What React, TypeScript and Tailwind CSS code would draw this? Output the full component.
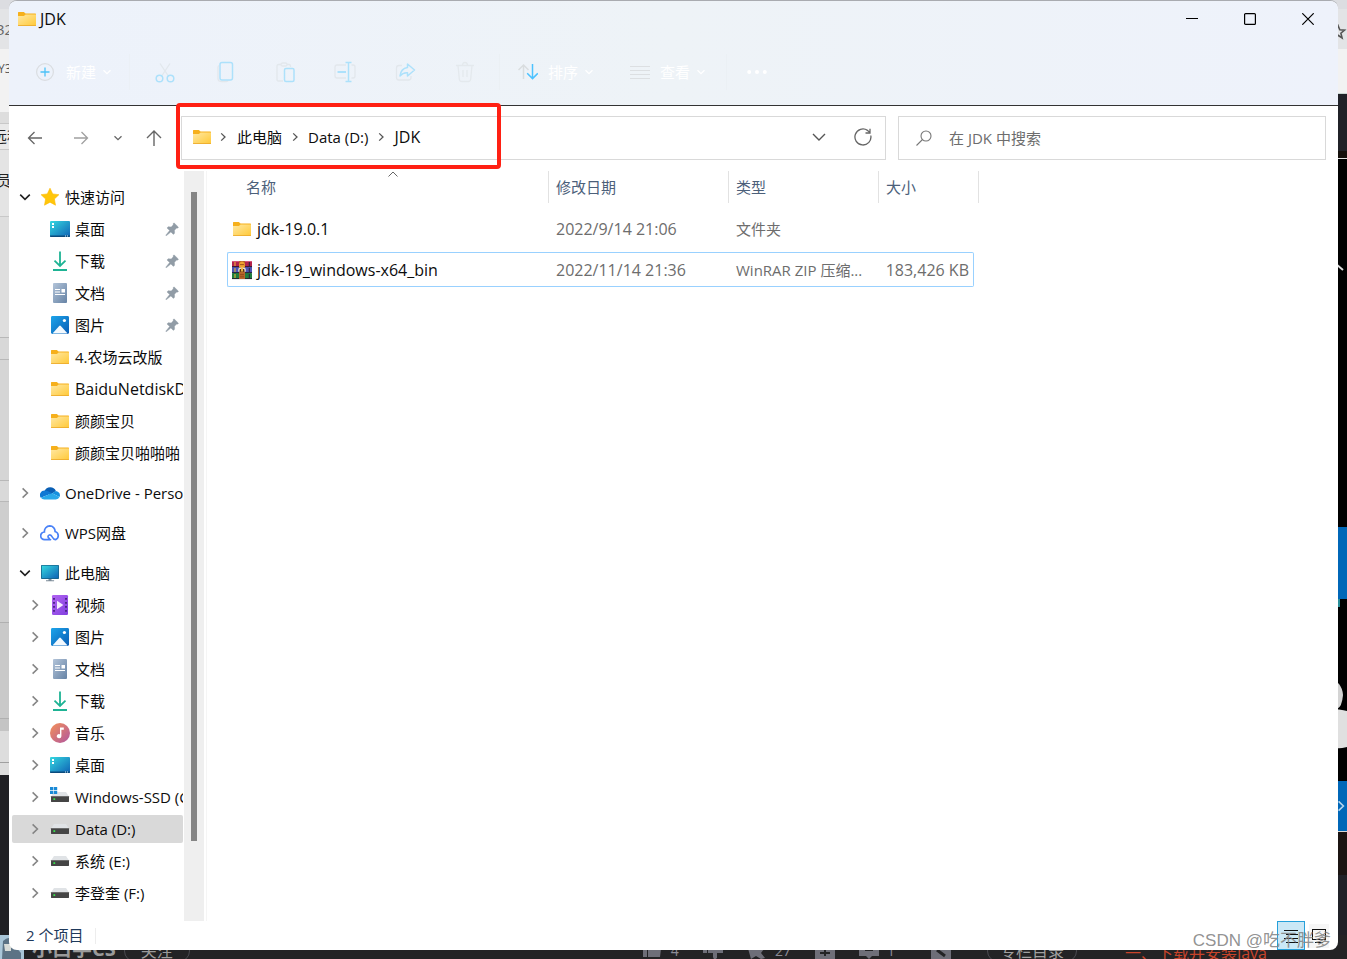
import { useState, type ReactNode } from "react";
import clsx from "clsx";

type IconProps = { className?: string };

const FolderIcon = ({ className = "w-5 h-5" }: IconProps) => (
    <svg viewBox="0 0 20 20" className={className}>
        <defs>
            <linearGradient id="folderFront" x1="0" y1="0" x2="1" y2="1">
                <stop offset="0" stopColor="#ffe8a3" />
                <stop offset="1" stopColor="#ffc938" />
            </linearGradient>
        </defs>
        <path d="M1 3.6q0-.6.6-.6h5.2l1.8 1.6H18.4q.6 0 .6.6V8H1z" fill="#f6b01c" />
        <path d="M1 6.9h5.9l1.7-1.3H19v10.6q0 .5-.6.5H1.6q-.6 0-.6-.5z" fill="url(#folderFront)" />
        <path d="M1 16.2h18v.3q0 .5-.6.5H1.6q-.6 0-.6-.5z" fill="#eaa21a" />
    </svg>
);

const StarIcon = () => (
    <svg viewBox="0 0 20 20" className="w-5 h-5">
        <path d="M10 1.2l2.7 5.7 6.2.8-4.5 4.3 1.1 6.2L10 15.2l-5.5 3 1.1-6.2L1.1 7.7l6.2-.8z" fill="#ffc60a" stroke="#fdb900" strokeWidth=".6" strokeLinejoin="round" />
    </svg>
);

const DesktopIcon = () => (
    <svg viewBox="0 0 20 20" className="w-5 h-5">
        <defs>
            <linearGradient id="desk" x1="0" y1="0" x2="1" y2="1">
                <stop offset="0" stopColor="#35d8e0" />
                <stop offset="1" stopColor="#0f62b5" />
            </linearGradient>
        </defs>
        <rect y="2" width="20" height="16" rx="1" fill="url(#desk)" />
        <path d="M0 16.6h20v.6q0 .8-1 .8H1q-1 0-1-.8z" fill="#0b4a7c" />
        <path d="M2 4h2v2H2zM2 7h2v2H2z" fill="#fff" />
        <path d="M15 17h1M17 17h1" stroke="#d5eefb" strokeWidth="1" />
    </svg>
);

const DownloadIcon = () => (
    <svg viewBox="0 0 20 20" className="w-5 h-5" fill="none">
        <path d="M10 .5v14M4.500 9.600l5.500 5.300 5.500-5.300M3 19h14" stroke="#1eb394" strokeWidth="1.800" />
    </svg>
);

const DocumentIcon = () => (
    <svg viewBox="0 0 20 20" className="w-5 h-5">
        <defs>
            <linearGradient id="doc" x1="0" y1="0" x2="1" y2="1">
                <stop offset="0" stopColor="#b3c4d9" />
                <stop offset="1" stopColor="#6683a5" />
            </linearGradient>
        </defs>
        <rect x="3" y="0" width="14" height="20" rx="1" fill="url(#doc)" />
        <path d="M5 6.500h5M5 9h5M5 11.500h10" stroke="#fff" strokeWidth="1.200" />
        <path d="M11.500 6h3.500v3.400h-3.500z" fill="#fff" />
    </svg>
);

const PictureIcon = () => (
    <svg viewBox="0 0 20 20" className="w-5 h-5">
        <defs>
            <linearGradient id="pic" x1="0" y1="0" x2="1" y2="1">
                <stop offset="0" stopColor="#1da5ea" />
                <stop offset="1" stopColor="#0a5cb4" />
            </linearGradient>
        </defs>
        <rect x="1" y="1" width="18" height="18" rx="1.4" fill="url(#pic)" />
        <circle cx="14.4" cy="5.5" r="1.6" fill="#fff" />
        <path d="M2.5 18.4l6.7-7.5q.8-.8 1.6 0l6.8 7.5z" fill="#f3f9fe" />
    </svg>
);

const OneDriveIcon = () => (
    <svg viewBox="0 0 20 20" className="w-5 h-5">
        <path d="M4.5 8.2A6.2 6.2 0 0 1 15.9 8L10 12z" fill="#0a5fb4" />
        <path d="M4.6 7.6a4.5 4.5 0 0 0-3.8 7.2L12 10.2 8 8.3a6 6 0 0 0-3.4-.7z" fill="#0f78d4" />
        <path d="M12 10.2l3.9-2.3a4.4 4.4 0 0 1 3.6 6.2z" fill="#1490df" />
        <path d="M.8 14.8A4.4 4.4 0 0 0 4.5 16.6h11.3a4 4 0 0 0 3.7-2.5L12 10.2z" fill="#28a8ea" />
    </svg>
);

const WpsCloudIcon = () => (
    <svg viewBox="0 0 20 20" className="w-5 h-5" fill="none" stroke="#4a82f7" strokeWidth="1.7" strokeLinecap="round">
        <path d="M10.5 16.6H4.6A3.8 3.8 0 0 1 4.4 9 5.6 5.6 0 0 1 9.8 2.9a5.4 5.4 0 0 1 5.3 5.6 4.3 4.3 0 0 1 .5 8.1c-4.2 0-2.6-5.2-6.2-4.6-1.8.4-1.8 2.8-.2 3.2" />
    </svg>
);

const ComputerIcon = () => (
    <svg viewBox="0 0 20 20" className="w-5 h-5">
        <rect x="1" y="2" width="18" height="14" rx=".8" fill="#16648c" />
        <rect x="1.8" y="2.7" width="16.4" height="12.4" fill="url(#desk)" />
        <path d="M8.5 16h3v1.3h2.6v1H6v-1h2.5z" fill="#7d8c99" />
    </svg>
);

const VideoIcon = () => (
    <svg viewBox="0 0 20 20" className="w-5 h-5">
        <defs>
            <linearGradient id="vid" x1="0" y1="0" x2="1" y2="1">
                <stop offset="0" stopColor="#b264f2" />
                <stop offset="1" stopColor="#8140df" />
            </linearGradient>
        </defs>
        <rect x="2" y="0" width="16" height="20" rx="1.2" fill="url(#vid)" />
        <path d="M4 3v15M16 3v15" stroke="#46217f" strokeWidth="1.8" strokeDasharray="1.8 2.2" />
        <path d="M7 5.8l6.4 4.2L7 14.2z" fill="#f5edff" />
    </svg>
);

const MusicIcon = () => (
    <svg viewBox="0 0 20 20" className="w-5 h-5">
        <defs>
            <linearGradient id="mus" x1="0" y1="0" x2="1" y2="1">
                <stop offset="0" stopColor="#f49158" />
                <stop offset="1" stopColor="#b0559f" />
            </linearGradient>
        </defs>
        <circle cx="10" cy="10" r="10" fill="url(#mus)" />
        <path d="M10 4.4h3.8v2.4h-2.4v6.4a2.3 2.1 0 1 1-1.4-2z" fill="#fff" />
    </svg>
);

const DriveIcon = ({ system = false }: { system?: boolean }) => (
    <svg viewBox="0 0 20 20" className="w-5 h-5">
        <path d="M4 5h12l3 4.500H1z" fill="#e0e3e6" />
        <rect x="1" y="9" width="18" height="6" rx=".4" fill="#454545" />
        <path d="M1 9h18v1H1z" fill="#6d6d6d" />
        <rect x="3.400" y="11.200" width="1.800" height="1.800" fill="#38e04c" />
        {system && <path d="M0 0h3.300v3.300H0zM3.900 0h3.300v3.300H3.900zM0 3.900h3.300v3.200H0zM3.900 3.900h3.300v3.200H3.900z" fill="#1b8ad6" />}
    </svg>
);

const WinRarIcon = () => (
    <svg viewBox="0 0 20 20" className="w-5 h-5">
        <rect x="0" y="1" width="20" height="6" rx=".6" fill="#b3234b" />
        <rect x="0" y="7" width="20" height="6" fill="#4c55b5" />
        <rect x="0" y="13" width="20" height="6" rx=".6" fill="#1f7d3f" />
        <path d="M0 1.500h20" stroke="#d2567a" />
        <path d="M0 6.600h20M0 12.600h20M0 18.600h20" stroke="#231a2c" strokeWidth=".9" />
        <path d="M3 2v4M3 8v4M3 14v4" stroke="#e8b53a" strokeWidth="1.100" />
        <path d="M17.300 2v4M17.300 8v4M17.300 14v4" stroke="#29213a" strokeWidth="1" />
        <rect x="7" y="1" width="6" height="18" fill="#b5652b" />
        <path d="M7.200 7V3.800q2.800-4.500 5.600 0V7z" fill="#f0a22f" />
        <path d="M8 4.600h4M8 14.600h4M8 16.800h4" stroke="#8a4417" strokeWidth=".8" />
        <path d="M6.900 11.800V9.500q0-1.500 3.100-1.500t3.100 1.500v2.300" fill="#5b3213" stroke="#e8e2da" strokeWidth="1.300" />
        <path d="M10 7v4.500" stroke="#f3c04b" strokeWidth="1.800" />
    </svg>
);

const PinIcon = () => (
    <svg viewBox="0 0 14 14" className="w-[14px] h-[14px]">
        <path d="M9 .8l4.500 4.400-1 1-.9-.1-2.100 2.200.1 2.900-1.200 1.200-2.500-2.500-4.300 3.700-.7.100.1-.8 3.600-4.300L2 6l1.200-1.300 3 .2 2.100-2.100-.2-1.100z" fill="#919ca6" stroke="#919ca6" strokeWidth=".4" />
    </svg>
);

const Chevron = ({ dir = "right", className = "" }: { dir?: "right" | "down"; className?: string }) => (
    <svg viewBox="0 0 12 12" className={clsx("w-3 h-3", className)} fill="none" stroke="currentColor" strokeWidth="1.600">
        <path d={dir === "right" ? "M3.600 1.400L8.400 6l-4.800 4.600" : "M1.200 3.600L6 8.400l4.800-4.800"} />
    </svg>
);

// Small chevron used next to toolbar labels and in the breadcrumb
const SmallChevron = ({ dir = "right" }: { dir?: "right" | "down" }) => (
    <svg viewBox="0 0 10 10" className="w-[10px] h-[10px]" fill="none" stroke="currentColor" strokeWidth="1.300">
        <path d={dir === "right" ? "M3.200 1.400L7 5 3.200 8.600" : "M1.500 3.200L5 6.700l3.500-3.500"} />
    </svg>
);

const toolIcons: { label: string; icon: ReactNode }[] = [
    {
        label: "剪切",
        icon: (
            <>
                <path d="M7 3.500l8 12M17 3.500l-8 12" stroke="#e2e7ec" />
                <circle cx="6.500" cy="18.500" r="3.300" stroke="#ade1fb" strokeWidth="1.500" />
                <circle cx="17.500" cy="18.500" r="3.300" stroke="#ade1fb" strokeWidth="1.500" />
            </>
        ),
    },
    {
        label: "复制",
        icon: (
            <>
                <path d="M6 5.500q-1 .4-1 1.800v11q0 3.200 3.200 3.200h5q1.600 0 2-1" stroke="#e2e7ec" />
                <rect x="7" y="2.500" width="12.500" height="17.500" rx="2" stroke="#ade1fb" strokeWidth="1.500" />
            </>
        ),
    },
    {
        label: "粘贴",
        icon: (
            <>
                <path d="M10 21H5.500Q4 21 4 19.500V6q0-1.500 1.500-1.500H8M14 4.500h2q1.500 0 1.500 1.500v1" stroke="#e2e7ec" />
                <rect x="8" y="3" width="6" height="3" rx="1.500" stroke="#e2e7ec" />
                <rect x="11.500" y="8.500" width="9.500" height="13" rx="1.500" stroke="#ade1fb" strokeWidth="1.500" />
            </>
        ),
    },
    {
        label: "重命名",
        icon: (
            <>
                <path d="M13 5H4Q2 5 2 7v9Q2 18 4 18H13M18.500 5h1.500q2 0 2 2v9q0 2-2 2h-1.500" stroke="#e2e7ec" />
                <path d="M12.500 2.500h6M12.500 21.500h6M15.500 2.500v19" stroke="#ade1fb" strokeWidth="1.500" />
                <path d="M4.500 12h8.500" stroke="#ade1fb" strokeWidth="2.200" />
            </>
        ),
    },
    {
        label: "共享",
        icon: (
            <>
                <path d="M9 5.500H6Q3.500 5.500 3.500 8v9.500Q3.500 20 6 20h9.500q2.500 0 2.500-2.500V16" stroke="#e2e7ec" />
                <path d="M14.500 4l7 6-7 6v-3.200q-4.500-.4-7.500 3.200 .8-7.500 7.500-8.500z" stroke="#ade1fb" strokeWidth="1.500" strokeLinejoin="round" />
            </>
        ),
    },
    {
        label: "删除",
        icon: (
            <path d="M3 5.500h18M9.500 5.500q0-3 2.500-3t2.500 3M5 5.500l1.300 13.500q.2 2.500 2.500 2.500h6.400q2.300 0 2.500-2.500L19 5.500M10 10v7M14 10v7" stroke="#e4e9ed" />
        ),
    },
];

type NavItem = { name: string; icon: ReactNode; className?: string; pinned?: boolean };

const quickAccess: NavItem[] = [
    { name: "桌面", icon: <DesktopIcon />, pinned: true },
    { name: "下载", icon: <DownloadIcon />, pinned: true },
    { name: "文档", icon: <DocumentIcon />, pinned: true },
    { name: "图片", icon: <PictureIcon />, pinned: true },
    { name: "4.农场云改版", icon: <FolderIcon /> },
    { name: "BaiduNetdiskDownload", icon: <FolderIcon />, className: "text-base leading-5" },
    { name: "颜颜宝贝", icon: <FolderIcon /> },
    { name: "颜颜宝贝啪啪啪", icon: <FolderIcon /> },
];

const thisPc: NavItem[] = [
    { name: "视频", icon: <VideoIcon /> },
    { name: "图片", icon: <PictureIcon /> },
    { name: "文档", icon: <DocumentIcon /> },
    { name: "下载", icon: <DownloadIcon /> },
    { name: "音乐", icon: <MusicIcon /> },
    { name: "桌面", icon: <DesktopIcon /> },
    { name: "Windows-SSD (C:)", icon: <DriveIcon system /> },
    { name: "Data (D:)", icon: <DriveIcon /> },
    { name: "系统 (E:)", icon: <DriveIcon /> },
    { name: "李登奎 (F:)", icon: <DriveIcon /> },
];

const files = [
    { name: "jdk-19.0.1", date: "2022/9/14 21:06", type: "文件夹", size: "", icon: <FolderIcon /> },
    { name: "jdk-19_windows-x64_bin", date: "2022/11/14 21:36", type: "WinRAR ZIP 压缩...", size: "183,426 KB", icon: <WinRarIcon /> },
];

function NavRow({ item, child = false, arrow, selected = false, onSelect }: {
    item: NavItem;
    child?: boolean;
    arrow?: "right" | "down";
    selected?: boolean;
    onSelect?: () => void;
}) {
    return (
        <li className="h-8 py-0.5">
            <a
                href="#"
                onClick={e => { e.preventDefault(); onSelect?.(); }}
                className={clsx("flex h-7 items-center overflow-hidden rounded-xs whitespace-nowrap", child && "pl-[10px]", selected && "bg-[#d9d9d9]")}
            >
                <span className="flex w-[26px] shrink-0 justify-center">
                    {arrow && <Chevron dir={arrow} className={arrow === "right" ? "text-[#858585]" : "text-[#222222]"} />}
                </span>
                <span className="ml-0.5 shrink-0">{item.icon}</span>
                <span className={clsx("ml-[5px]", item.className ?? "text-[15px]")}>{item.name}</span>
                {item.pinned && <span className="mr-1 ml-auto"><PinIcon /></span>}
            </a>
        </li>
    );
}

// Pages that stay visible around the edges of the window
function Backdrop() {
    return (
        <div className="absolute inset-0 flex flex-col overflow-hidden bg-[#202024]" aria-hidden="true">
            <div className="flex min-h-0 flex-1 justify-between">
                <div className="flex w-5 flex-col overflow-hidden text-[15px] leading-5 text-[#222222]">
                    <div className="h-[9px] shrink-0 bg-[#dcdde1]" />
                    <div className="flex h-10 shrink-0 items-center bg-[#e3e4e6] text-[#666666]"><span className="-ml-1">32</span></div>
                    <div className="h-[63px] shrink-0 bg-[#f2f2f2] pt-3 text-xs text-[#555555]"><span className="-ml-0.5">Y3</span></div>
                    <div className="h-3 shrink-0 border-b border-[#c8c8c8] bg-[#dddddd]" />
                    <div className="h-[26px] shrink-0 border-b border-[#c8c8c8] bg-[#e9e9e9] pt-0.5 whitespace-nowrap"><span className="-ml-2">远程</span></div>
                    <div className="h-[67px] shrink-0 border-b border-[#c8c8c8] bg-[#e4e4e4] pt-5"><span className="-ml-1">员</span></div>
                    <div className="h-[121px] shrink-0 border-b border-[#b8b8b8] bg-[#dedede]" />
                    <div className="h-[22px] shrink-0 border-b border-[#b8b8b8] bg-[#d8d8d8]" />
                    <div className="h-[121px] shrink-0 border-b border-[#b8b8b8] bg-[#d5d5d5]" />
                    <div className="h-[21px] shrink-0 border-b border-[#b8b8b8] bg-[#d9d9d9]" />
                    <div className="h-[121px] shrink-0 border-b border-[#b0b0b0] bg-[#cecece]" />
                    <div className="h-24 shrink-0 border-b border-[#b0b0b0] bg-[#c9c9c9]" />
                    <div className="h-3 shrink-0 bg-[#c4c4c4]" />
                    <div className="h-8 shrink-0 border-b border-[#a0a0a0] bg-[#dddddd]" />
                    <div className="h-3 shrink-0 bg-[#dddddd]" />
                    <div className="flex-1 bg-[#202024]" />
                </div>
                <div className="flex w-5 flex-col items-end overflow-hidden">
                    <div className="h-[9px] w-full shrink-0 bg-[#dcdde1]" />
                    <div className="flex h-10 w-full shrink-0 items-center justify-end bg-[#e3e4e6] pt-1.5">
                        <svg viewBox="0 0 16 16" className="h-4 w-4" fill="none" stroke="#555555" strokeWidth="1.600">
                            <path d="M7 1.500l1.800 4.300 4.700.400-3.600 3 1.200 4.700L7 11.300l-4.100 2.600 1.200-4.700-3.600-3 4.700-.400z" />
                        </svg>
                    </div>
                    <div className="h-[45px] w-full shrink-0 border-b border-[#c9d6d2] bg-[#f2f2f2]" />
                    <div className="h-[57px] w-full shrink-0 bg-[#202127]" />
                    <div className="h-2 w-full shrink-0 border-b border-[#e0e0e0] bg-[#15100c]" />
                    <div className="h-[368px] w-full shrink-0 bg-black pt-[104px]">
                        <svg viewBox="0 0 20 10" className="h-[10px] w-5"><path d="M9 1l7 6" stroke="#dddddd" strokeWidth="2" /></svg>
                    </div>
                    <div className="h-[72px] w-full shrink-0 bg-[#0067b8]" />
                    <div className="h-[182px] w-full shrink-0 bg-black">
                        <svg viewBox="0 0 20 182" className="h-[182px] w-5">
                            <path d="M11 0h2v8h-2z" fill="#2a8f9a" />
                            <path d="M0 78q15 4 16 18-1 12-6 14H0z" fill="#d4d4d4" />
                            <path d="M0 110q14 0 20 2v36q-6 2-20 1z" fill="#e0e0e0" />
                        </svg>
                    </div>
                    <div className="flex h-[51px] w-full shrink-0 items-center justify-end border-b border-[#d8d8d8] bg-[#0067b8] text-[#b4d5ee]">
                        <Chevron />
                    </div>
                    <div className="h-[43px] w-full shrink-0 bg-[#1b1412]" />
                    <div className="w-full flex-1 bg-[#202127]" />
                </div>
            </div>
            <div className="flex h-6 shrink-0 items-center overflow-hidden bg-[#232325] text-sm leading-5 whitespace-nowrap text-[#8c8c96]">
                <svg viewBox="0 0 24 24" className="h-6 w-6 shrink-0">
                    <rect width="24" height="24" fill="#a9c6d8" />
                    <path d="M3 6q8-7 10 3l8 9v6H2z" fill="#5c7385" />
                    <path d="M4 9h7v7H5z" fill="#d8dcd8" />
                </svg>
                <span className="mt-1 ml-2 text-xl leading-6 font-bold text-[#9a9a9a]">小白学CS</span>
                <span className="mt-2 ml-2 rounded-full border border-[#4a4a50] px-4 text-base leading-5 text-[#9a9a9a]">关注</span>
                <div className="ml-auto flex items-center gap-6 pt-2">
                    <span className="flex items-center gap-2">
                        <svg viewBox="0 0 20 20" className="h-5 w-5" fill="#6e6e78"><path d="M0 0h4v16H0zM5 0h14l-2 16H5z" /></svg>
                        4
                    </span>
                    <svg viewBox="0 0 20 20" className="h-5 w-5" fill="#6e6e78"><path d="M0 0h4v12H0zM5 0h15v12h-6v5q-3 3-4-1v-4H5z" /></svg>
                    <span className="flex items-center gap-2">
                        <svg viewBox="0 0 20 20" className="h-5 w-5" fill="#6e6e78"><path d="M0 4l10 3 10-3-6 8 4 5-4 1-5-3-5 3z" /></svg>
                        27
                    </span>
                    <svg viewBox="0 0 20 20" className="h-5 w-5"><path d="M0 0h20v18H0z" fill="#6e6e78" /><path d="M5 8h10M5 12h10M10 6v9" stroke="#232325" strokeWidth="2" /></svg>
                    <span className="flex items-center gap-2">
                        <svg viewBox="0 0 20 20" className="h-5 w-5"><path d="M0 0h20v15h-7l-3 3-3-3H0z" fill="#6e6e78" /><path d="M6 9h8" stroke="#232325" strokeWidth="2" /></svg>
                        1
                    </span>
                    <svg viewBox="0 0 20 20" className="ml-3 h-5 w-5"><path d="M0 0h20v18H0z" fill="#6e6e78" /><path d="M6 9l8 6" stroke="#232325" strokeWidth="3" /></svg>
                    <span className="ml-3 rounded-full border border-[#4a4a50] px-3 text-base leading-5 text-[#a0a0a0]">专栏目录</span>
                </div>
                <span className="mt-3 mr-20 ml-12 text-base leading-5 text-[#c8432a]">一、下载并安装Java</span>
            </div>
        </div>
    );
}

export default function App() {
    const [selected, setSelected] = useState("Data (D:)");
    const [search, setSearch] = useState("");

    return (
        <div className="relative flex h-screen min-h-[600px] flex-col overflow-hidden px-[9px] pb-[9px] font-['Open_Sans','Noto_Sans_CJK_SC',sans-serif] leading-5 text-[#0c0c0c]">
            <Backdrop />
            <main className="relative flex min-h-0 flex-1 flex-col overflow-hidden rounded-lg border-t border-[#a9abb0] bg-white">
                <header className="border-b border-[#333333] bg-linear-to-r from-[#edf2fb] via-[#eef3f7] to-[#eef2fb]">
                    <div className="flex h-9 items-center pl-2">
                        <FolderIcon />
                        <h1 className="ml-[3px] text-base leading-5">JDK</h1>
                        <div className="mr-[1px] ml-auto flex">
                            <button className="flex h-9 w-[58px] items-center justify-center" aria-label="最小化">
                                <svg viewBox="0 0 12 12" className="h-3 w-3"><path d="M0 5.500h12" stroke="#000" /></svg>
                            </button>
                            <button className="flex h-9 w-[58px] items-center justify-center" aria-label="最大化">
                                <svg viewBox="0 0 12 12" className="h-3 w-3" fill="none"><rect x=".6" y=".6" width="10.800" height="10.800" rx="1" stroke="#000" strokeWidth="1.200" /></svg>
                            </button>
                            <button className="flex h-9 w-[58px] items-center justify-center" aria-label="关闭">
                                <svg viewBox="0 0 12 12" className="h-3 w-3"><path d="M.3.300l11.400 11.400M11.700.300L.300 11.700" stroke="#000" strokeWidth="1.200" /></svg>
                            </button>
                        </div>
                    </div>

                    <div className="flex h-[68px] items-center pt-0.5 pl-[27px] text-[15px] text-white">
                        <button className="flex items-center">
                            <svg viewBox="0 0 18 18" className="h-[18px] w-[18px]" fill="none">
                                <circle cx="9" cy="9" r="8.400" stroke="#dadde1" strokeWidth="1.200" />
                                <path d="M9 4.500v9M4.500 9h9" stroke="#4cc2f8" strokeWidth="1.300" />
                            </svg>
                            <span className="mr-1.5 ml-3">新建</span>
                            <SmallChevron dir="down" />
                        </button>
                        <span className="mr-[5px] ml-[17px] h-9 w-px bg-[#ebf0f6]" />
                        {toolIcons.map(tool => (
                            <button key={tool.label} aria-label={tool.label} className="flex w-[60px] justify-center">
                                <svg viewBox="0 0 24 24" className="h-6 w-6" fill="none" strokeWidth="1.300">{tool.icon}</svg>
                            </button>
                        ))}
                        <span className="mr-[18px] ml-1 h-9 w-px bg-[#ebf0f4]" />
                        <button className="flex items-center">
                            <svg viewBox="0 0 20 20" className="h-5 w-5" fill="none" strokeWidth="1.500">
                                <path d="M5.500 17V3M.5 8l5-5 5 5" stroke="#d9dddf" />
                                <path d="M14.500 2v14.500M9.200 11.300l5.300 5.300 5.300-5.300" stroke="#4cc2ff" />
                            </svg>
                            <span className="mr-1.5 ml-[10px]">排序</span>
                            <SmallChevron dir="down" />
                        </button>
                        <button className="ml-9 flex items-center">
                            <svg viewBox="0 0 20 20" className="h-5 w-5" stroke="#dcdfe2">
                                <path d="M0 4.500h20M0 8.500h20M0 12.500h20M0 16.500h20" />
                            </svg>
                            <span className="mr-1.5 ml-[10px]">查看</span>
                            <SmallChevron dir="down" />
                        </button>
                        <span className="mx-5 h-9 w-px bg-[#ebf0f4]" />
                        <button aria-label="更多">
                            <svg viewBox="0 0 20 20" className="h-5 w-5" fill="#fff">
                                <circle cx="2.200" cy="10" r="2" /><circle cx="10" cy="10" r="2" /><circle cx="17.800" cy="10" r="2" />
                            </svg>
                        </button>
                    </div>
                </header>

                <div className="flex h-[65px] shrink-0 pt-[10px] pr-3 pl-[3px]">
                    <nav className="flex h-11 items-center text-[#666666]" aria-label="导航">
                        <button className="flex w-[46px] justify-center" aria-label="后退">
                            <svg viewBox="0 0 16 16" className="h-4 w-4" fill="none" stroke="currentColor" strokeWidth="1.300"><path d="M15 8H1.500M7.500 2l-6 6 6 6" /></svg>
                        </button>
                        <button className="flex w-[46px] justify-center text-[#a0a0a0]" aria-label="前进">
                            <svg viewBox="0 0 16 16" className="h-4 w-4" fill="none" stroke="currentColor" strokeWidth="1.300"><path d="M1 8h13.500M8.500 2l6 6-6 6" /></svg>
                        </button>
                        <button className="flex w-7 justify-center" aria-label="最近的位置"><SmallChevron dir="down" /></button>
                        <button className="flex w-11 justify-center" aria-label="向上">
                            <svg viewBox="0 0 16 16" className="h-4 w-4" fill="none" stroke="currentColor" strokeWidth="1.400"><path d="M8 16V1M1 8l7-7 7 7" /></svg>
                        </button>
                    </nav>

                    <div className="relative ml-[5px] flex h-11 min-w-0 flex-1 items-center border border-[#d9d9d9] pb-0.5 pl-[10px] text-[15px]">
                        <FolderIcon />
                        <span className="mx-1.5 text-[#555555]"><SmallChevron /></span>
                        <button className="ml-[3px]">此电脑</button>
                        <span className="mx-2 text-[#555555]"><SmallChevron /></span>
                        <button>Data (D:)</button>
                        <span className="mx-2 text-[#555555]"><SmallChevron /></span>
                        <button className="text-base leading-5">JDK</button>
                        <button className="ml-auto flex w-11 justify-center text-[#555555]" aria-label="上一个位置">
                            <svg viewBox="0 0 14 14" className="h-[14px] w-[14px]" fill="none" stroke="currentColor" strokeWidth="1.400"><path d="M1 4l6 6 6-6" /></svg>
                        </button>
                        <button className="flex w-11 justify-center text-[#666666]" aria-label="刷新">
                            <svg viewBox="0 0 18 18" className="h-[18px] w-[18px]" fill="none" stroke="currentColor" strokeWidth="1.300"><path d="M16.800 7.500A8 8 0 1 1 13.500 2.400L15.800 4.300M16 .8v4.200h-4.500" /></svg>
                        </button>
                        <div className="pointer-events-none absolute -top-[14px] -left-1.5 h-[66px] w-[325px] rounded-sm border-4 border-[#ff2013]" />
                    </div>

                    <label className="ml-3 flex h-11 w-[428px] items-center border border-[#d9d9d9] pl-[17px]">
                        <svg viewBox="0 0 16 16" className="h-4 w-4" fill="none" stroke="#777777" strokeWidth="1.100"><circle cx="10" cy="6" r="5" /><path d="M6.500 9.500L.5 15.500" /></svg>
                        <input
                            type="text"
                            aria-label="搜索"
                            className="ml-[17px] min-w-0 flex-1 text-[15px] outline-none placeholder:text-[#6d6d6d]"
                            placeholder="在 JDK 中搜索"
                            value={search}
                            onChange={e => setSearch(e.target.value)}
                        />
                    </label>
                </div>

                <div className="flex min-h-0 flex-1">
                    <aside className="w-[174px] shrink-0 overflow-hidden pt-[10px] pl-[3px]">
                        <ul>
                            <NavRow item={{ name: "快速访问", icon: <StarIcon /> }} arrow="down" />
                            {quickAccess.map(item => <NavRow key={item.name} item={item} child />)}
                        </ul>
                        <ul className="mt-2 flex flex-col gap-2">
                            <NavRow item={{ name: "OneDrive - Personal", icon: <OneDriveIcon /> }} arrow="right" />
                            <NavRow item={{ name: "WPS网盘", icon: <WpsCloudIcon /> }} arrow="right" />
                        </ul>
                        <ul className="mt-2">
                            <NavRow item={{ name: "此电脑", icon: <ComputerIcon /> }} arrow="down" />
                            {thisPc.map(item => (
                                <NavRow key={item.name} item={item} child arrow="right" selected={selected === item.name} onSelect={() => setSelected(item.name)} />
                            ))}
                        </ul>
                    </aside>
                    <div className="ml-px flex w-5 shrink-0 justify-center bg-[#efefef] pt-[21px] pb-20">
                        <div className="w-1.5 bg-[#858585]" />
                    </div>
                    <div className="ml-0.5 w-px bg-[#f5f5f5]" />

                    <section className="relative min-w-0 flex-1 overflow-hidden pl-5">
                        <svg viewBox="0 0 10 6" className="absolute top-0 left-[181px] h-1.5 w-[10px]" fill="none" stroke="#666666"><path d="M.5 5.500L5 1l4.500 4.500" /></svg>
                        <table className="w-[752px] table-fixed border-collapse text-left">
                            <colgroup>
                                <col className="w-[322px]" />
                                <col className="w-[180px]" />
                                <col className="w-[150px]" />
                                <col className="w-[95px]" />
                                <col className="w-[5px]" />
                            </colgroup>
                            <thead className="text-[15px] text-[#4c607a]">
                                <tr className="h-[37px] align-top">
                                    <th className="p-0 font-normal"><div className="h-8 border-r border-[#e2e2e2] pt-1.5 pl-[19px]">名称</div></th>
                                    <th className="p-0 font-normal"><div className="h-8 border-r border-[#e2e2e2] pt-1.5 pl-[7px]">修改日期</div></th>
                                    <th className="p-0 font-normal"><div className="h-8 border-r border-[#e2e2e2] pt-1.5 pl-[7px]">类型</div></th>
                                    <th className="p-0 font-normal" colSpan={2}><div className="h-8 border-r border-[#e2e2e2] pt-1.5 pl-[7px]">大小</div></th>
                                </tr>
                            </thead>
                            <tbody className="text-base leading-5 text-[#6d6d6d]">
                                {files.map((f, i) => {
                                    const border = i === 1 ? "border-[#99d1ff]" : "border-transparent";
                                    return (
                                        <tr key={f.name} className="h-[41px]">
                                            <td className="p-0">
                                                <div className={clsx("flex h-[35px] items-center rounded-l-xs border-y border-l pl-1 text-[#0c0c0c]", border)}>
                                                    {f.icon}
                                                    <span className="ml-[5px]">{f.name}</span>
                                                </div>
                                            </td>
                                            <td className="p-0"><div className={clsx("flex h-[35px] items-center border-y pl-[7px]", border)}>{f.date}</div></td>
                                            <td className="p-0">
                                                <div className={clsx("flex h-[35px] items-center border-y pl-[7px] text-[15px] whitespace-nowrap", border)}>{f.type}</div>
                                            </td>
                                            <td className="p-0"><div className={clsx("flex h-[35px] items-center justify-end rounded-r-xs border-y border-r pr-1 whitespace-nowrap", border)}>{f.size}</div></td>
                                            <td />
                                        </tr>
                                    );
                                })}
                            </tbody>
                        </table>
                    </section>
                </div>

                <footer className="flex h-[29px] shrink-0 items-center pl-[17px] text-[15px] text-[#1e395b]">
                    <span className="pb-0.5">2 个项目</span>
                    <span className="ml-3 h-4 w-px bg-[#ededed]" />
                    <button className="mr-1 ml-auto flex h-[29px] w-7 items-center justify-center border border-[#26a0da] bg-[#cbe8f6]" aria-label="详细信息">
                        <svg viewBox="0 0 16 14" className="h-[14px] w-4" stroke="#111"><path d="M1 1.500h14M3 5.500h12M1 9.500h14M3 13.500h12" /></svg>
                    </button>
                    <button className="mr-[9px] flex h-6 w-5 items-center justify-center bg-[#f6f6f6]" aria-label="大图标">
                        <svg viewBox="0 0 14 14" className="h-[14px] w-[14px]" fill="none" stroke="#111"><rect x=".5" y=".5" width="13" height="10" /><path d="M3 13.500h8" /></svg>
                    </button>
                </footer>
            </main>
            <span className="pointer-events-none absolute right-4 bottom-2 font-['Liberation_Sans','Noto_Sans_CJK_SC',sans-serif] text-[17px] leading-5 text-[#858585]/90">CSDN @吃不胖爹</span>
        </div>
    );
}
